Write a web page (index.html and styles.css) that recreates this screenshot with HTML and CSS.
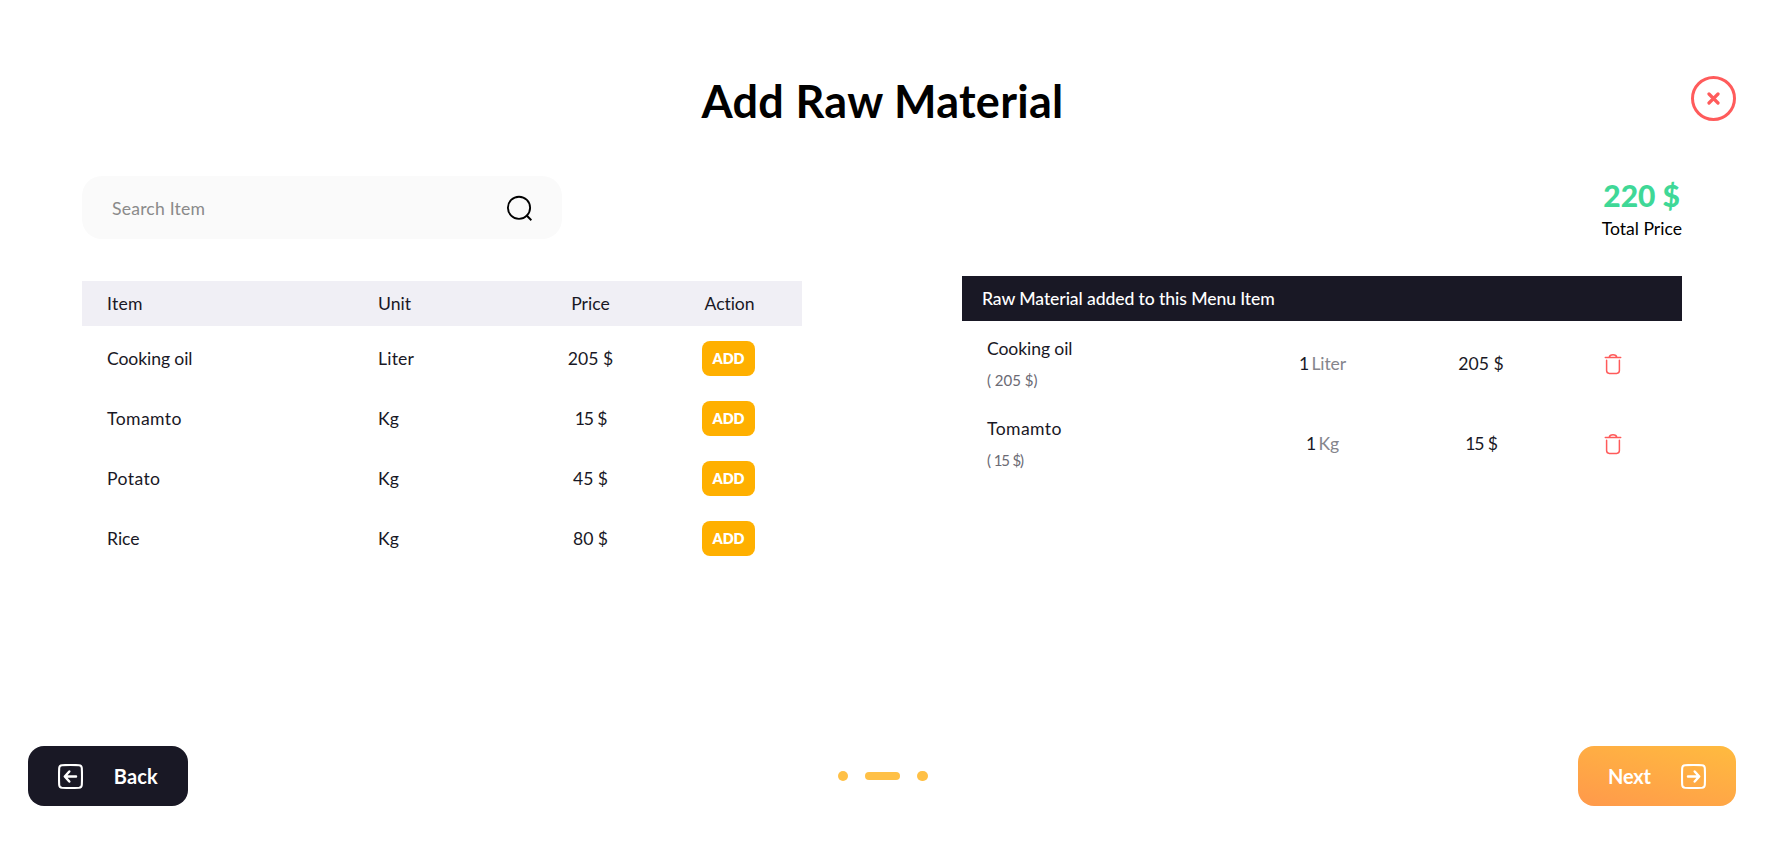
FILE: index.html
```html
<!DOCTYPE html>
<html lang="en">
<head>
<meta charset="utf-8">
<title>Add Raw Material</title>
<link rel="stylesheet" href="styles.css">
</head>
<body>
<svg class="sprite" width="0" height="0">
  <symbol id="trash" viewBox="0 0 18 22">
    <path d="M1.3 4.6H16.7M5.2 4.4C5.5 2.6 6.6 1.7 9 1.7S12.5 2.6 12.8 4.4M2.6 7.2V17.6C2.6 19.6 3.5 20.4 5.4 20.4H12.6C14.5 20.4 15.4 19.6 15.4 17.6V7.2" fill="none" stroke="currentColor" stroke-width="1.5" stroke-linecap="round"/>
  </symbol>
</svg>
<div class="page">
  <header class="header">
    <h1 class="title">Add Raw Material</h1>
    <button class="close" aria-label="Close">
      <svg width="13" height="13" viewBox="0 0 13 13"><path d="M2 2L11 11M11 2L2 11" stroke="currentColor" stroke-width="3.2" stroke-linecap="round"/></svg>
    </button>
  </header>

  <section class="toolbar">
    <div class="search">
      <span class="search-text">Search Item</span>
      <svg width="26" height="26" viewBox="0 0 26 26" fill="none" stroke="#000" stroke-width="1.9"><circle cx="13" cy="12.8" r="11.1"/><path d="M20.2 20L25.4 25.2" stroke-width="2"/></svg>
    </div>
    <div class="total">
      <strong class="total-value">220 $</strong>
      <span class="total-label">Total Price</span>
    </div>
  </section>

  <main class="panels">
    <div class="stock">
      <div class="stock-row stock-head"><span class="item">Item</span><span>Unit</span><span class="center">Price</span><span class="center action">Action</span></div>
      <div class="stock-row"><span class="snug">Cooking oil</span><span class="unit">Liter</span><span class="center">205 $</span><button class="add">ADD</button></div>
      <div class="stock-row"><span class="wide">Tomamto</span><span>Kg</span><span class="center teen">15 $</span><button class="add">ADD</button></div>
      <div class="stock-row"><span class="wide">Potato</span><span>Kg</span><span class="center">45 $</span><button class="add">ADD</button></div>
      <div class="stock-row"><span>Rice</span><span>Kg</span><span class="center">80 $</span><button class="add">ADD</button></div>
    </div>
    <div class="chosen">
      <div class="chosen-head">Raw Material added to this Menu Item</div>
      <div class="chosen-row">
        <div class="name"><span class="snug">Cooking oil</span><small>( 205 $)</small></div>
        <div class="center amount">1 <span class="muted">Liter</span></div>
        <div class="center">205 $</div>
        <svg class="trash" width="18" height="22"><use href="#trash"/></svg>
      </div>
      <div class="chosen-row">
        <div class="name"><span class="wide">Tomamto</span><small class="teen">( 15 $)</small></div>
        <div class="center amount">1 <span class="muted">Kg</span></div>
        <div class="center teen">15 $</div>
        <svg class="trash" width="18" height="22"><use href="#trash"/></svg>
      </div>
    </div>
  </main>

  <footer class="footer">
    <button class="nav back">
      <svg width="25" height="25" viewBox="0 0 25 25" fill="none" stroke="currentColor" stroke-width="2.1" stroke-linecap="round" stroke-linejoin="round"><path d="M4 1.2Q12.5 .7 21 1.2Q23.6 1.4 23.8 4Q24.2 12.5 23.8 21Q23.6 23.6 21 23.8Q12.5 24.2 4 23.8Q1.4 23.6 1.2 21Q.8 12.5 1.2 4Q1.4 1.4 4 1.2Z"/><path d="M18 12.5H7.2M11.3 7.5L6.8 12.5L11.3 17.5" stroke-width="2.5"/></svg>
      <span>Back</span>
    </button>
    <div class="steps"><i class="dot"></i><i class="dot current"></i><i class="dot"></i></div>
    <button class="nav next">
      <span>Next</span>
      <svg width="25" height="25" viewBox="0 0 25 25" fill="none" stroke="currentColor" stroke-width="2.1" stroke-linecap="round" stroke-linejoin="round"><path d="M4 1.2Q12.5 .7 21 1.2Q23.6 1.4 23.8 4Q24.2 12.5 23.8 21Q23.6 23.6 21 23.8Q12.5 24.2 4 23.8Q1.4 23.6 1.2 21Q.8 12.5 1.2 4Q1.4 1.4 4 1.2Z"/><path d="M7 12.5H17.8M13.7 7.5L18.2 12.5L13.7 17.5" stroke-width="2.5"/></svg>
    </button>
  </footer>
</div>
</body>
</html>
```
FILE: styles.css
```css
* { box-sizing: border-box; }
body { margin: 0; background: #fff; color: #191825; font: 400 17.6px/22px Lato, "Open Sans", sans-serif; }
button { font-family: inherit; border: 0; padding: 0; }
.sprite { display: block; }
.page { display: flex; flex-direction: column; height: 849px; padding: 76px 47px 43px 28px; }

.header { display: grid; grid-template-columns: 1fr auto 1fr; grid-template-rows: 45px; align-items: center; }
.title { grid-column: 2; margin: 5px 0 0; padding-left: 1px; font-size: 45px; line-height: 50px; font-weight: 700; color: #000; letter-spacing: .3px; }
.close { justify-self: end; display: flex; align-items: center; justify-content: center; width: 45px; height: 45px; border: 3px solid #ff5b5b; border-radius: 50%; background: #fff; color: #ff5b5b; }

.toolbar { display: flex; justify-content: space-between; height: 63px; margin: 55px 54px 0; }
.search { display: flex; justify-content: space-between; align-items: center; width: 480px; padding: 1px 30px 0; border-radius: 20px; background: #fafafa; }
.search-text { color: #8a8a8a; padding-top: 1px; letter-spacing: .2px; }
.total { display: flex; flex-direction: column; align-items: flex-end; padding-top: 3px; }
.total-value { padding-right: 2px; font-size: 30px; line-height: 32px; font-weight: 900; color: #3fd897; }
.total-label { padding-top: 7px; color: #000; }

.panels { display: flex; justify-content: space-between; align-items: flex-start; margin: 37px 54px 0; }
.center { text-align: center; }
.item { letter-spacing: .3px; }
.wide { letter-spacing: .4px; }
.snug { letter-spacing: -.1px; }
.unit { letter-spacing: .2px; }
.teen { letter-spacing: -1.3px; word-spacing: 1.5px; }
.action { padding-left: 2px; letter-spacing: -.1px; }

.stock { width: 720px; padding-top: 5px; }
.stock-row { display: grid; grid-template-columns: 271px 142px 141px 135px; align-items: center; height: 60px; padding-left: 25px; }
.stock-head { height: 45px; margin-bottom: 3px; background: #f0eff5; }
.add { justify-self: center; width: 53px; height: 35px; margin-bottom: 1px; border-radius: 8px; background: #ffb000; color: #fff; font-size: 14.4px; font-weight: 800; }

.chosen { width: 720px; }
.chosen-head { height: 45px; margin-bottom: 3px; padding: 12px 20px; background: #191825; color: #fff; font-weight: 500; letter-spacing: -.1px; }
.chosen-row { display: grid; grid-template-columns: 243px 185px 132px 131px; align-items: center; height: 80px; padding-left: 25px; }
.name { display: flex; flex-direction: column; gap: 9px; padding-top: 1px; }
.name small { font-size: 15px; color: #6b6a74; }
.amount { word-spacing: -2px; letter-spacing: -.1px; }
.muted { color: #85858c; }
.trash { justify-self: center; color: #ff5b5b; }

.footer { display: flex; justify-content: space-between; align-items: center; margin-top: auto; }
.nav { display: flex; justify-content: space-between; align-items: center; width: 160px; height: 60px; padding: 0 30px; border-radius: 16px; color: #fff; font-size: 20px; font-weight: 700; }
.back { background: #191825; }
.back span { letter-spacing: .2px; }
.next { width: 158px; background: linear-gradient(15deg, #ff994b, #ffbb3f); }
.next span { letter-spacing: -.2px; }
.steps { display: flex; align-items: center; gap: 17px; padding-right: 1px; }
.dot { width: 10.5px; height: 10.5px; border-radius: 6px; background: #ffc046; }
.current { width: 35px; height: 8px; }
```
